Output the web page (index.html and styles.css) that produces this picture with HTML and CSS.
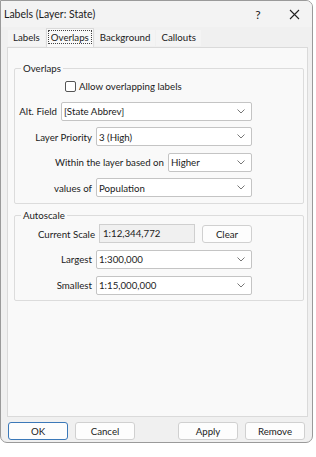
FILE: index.html
```html
<!DOCTYPE html>
<html lang="en">
<head>
    <meta charset="UTF-8">
    <title>Labels (Layer: State)</title>
    <link rel="stylesheet" href="styles.css">
</head>
<body>

<div class="window">
    <div class="titlebar">
        <span class="title">Labels (Layer: State)</span>
        <span class="title-btn help">?</span>
        <span class="title-btn close">
            <svg width="11" height="11" viewBox="0 0 11 11"><path d="M1 1 L10 10 M10 1 L1 10" stroke="#222" stroke-width="1.1" fill="none"/></svg>
        </span>
    </div>

    <div class="tabs">
        <div class="tab">Labels</div>
        <div class="tab active"><span class="focus">Overlaps</span></div>
        <div class="tab">Background</div>
        <div class="tab">Callouts</div>
    </div>

    <div class="panel">
        <fieldset class="group overlaps">
            <legend>Overlaps</legend>
            <label class="check-row">
                <span class="checkbox"></span>
                Allow overlapping labels
            </label>
            <div class="row">
                <span class="lbl">Alt. Field</span>
                <div class="combo w-alt">[State Abbrev]<svg class="chev" width="8" height="5" viewBox="0 0 8 5"><path d="M0.5 0.5 L4 4 L7.5 0.5" stroke="#777" fill="none"/></svg></div>
            </div>
            <div class="row">
                <span class="lbl">Layer Priority</span>
                <div class="combo w-wide">3 (High)<svg class="chev" width="8" height="5" viewBox="0 0 8 5"><path d="M0.5 0.5 L4 4 L7.5 0.5" stroke="#777" fill="none"/></svg></div>
            </div>
            <div class="row">
                <span class="lbl">Within the layer based on</span>
                <div class="combo w-short">Higher<svg class="chev" width="8" height="5" viewBox="0 0 8 5"><path d="M0.5 0.5 L4 4 L7.5 0.5" stroke="#777" fill="none"/></svg></div>
            </div>
            <div class="row">
                <span class="lbl">values of</span>
                <div class="combo w-wide">Population<svg class="chev" width="8" height="5" viewBox="0 0 8 5"><path d="M0.5 0.5 L4 4 L7.5 0.5" stroke="#777" fill="none"/></svg></div>
            </div>
        </fieldset>

        <fieldset class="group autoscale">
            <legend>Autoscale</legend>
            <div class="row">
                <span class="lbl">Current Scale</span>
                <div class="readonly">1:12,344,772</div>
                <button class="btn clear">Clear</button>
            </div>
            <div class="row">
                <span class="lbl">Largest</span>
                <div class="combo w-wide">1:300,000<svg class="chev" width="8" height="5" viewBox="0 0 8 5"><path d="M0.5 0.5 L4 4 L7.5 0.5" stroke="#777" fill="none"/></svg></div>
            </div>
            <div class="row">
                <span class="lbl">Smallest</span>
                <div class="combo w-wide">1:15,000,000<svg class="chev" width="8" height="5" viewBox="0 0 8 5"><path d="M0.5 0.5 L4 4 L7.5 0.5" stroke="#777" fill="none"/></svg></div>
            </div>
        </fieldset>
    </div>

    <div class="footer">
        <button class="btn default">OK</button>
        <button class="btn">Cancel</button>
        <span class="spacer"></span>
        <button class="btn">Apply</button>
        <button class="btn">Remove</button>
    </div>
</div>

</body>
</html>
```

FILE: styles.css
```css
body {
    margin: 0;
    padding: 0;
    background: #fff;
    font-family: Lato, "Open Sans", Arial, sans-serif;
    font-size: 9.7px;
    color: #1b1b1b;
}
.window {
    width: 311px;
    height: 441px;
    background-color: #f0f0f0;
    border: 1px solid #9a9a9a;
    border-radius: 0 7px 7px 7px;
    display: flex;
    flex-direction: column;
    overflow: hidden;
}
.titlebar {
    height: 26px;
    display: flex;
    align-items: center;
    background-color: #f3f3f3;
    font-size: 10.5px;
}
.title {
    flex: 1;
    padding-left: 3px;
}
.title-btn {
    width: 36px;
    text-align: center;
    font-size: 12px;
}
.close {
    display: flex;
    justify-content: center;
}
.tabs {
    display: flex;
    padding-left: 7px;
    margin-top: 2px;
    height: 17px;
    align-items: flex-end;
}
.tab {
    padding: 1px 5px 2px;
    margin-right: 1px;
    background-color: #f4f4f4;
    line-height: 13px;
}
.tab.active {
    background-color: #f9f9f9;
    padding: 2px 1px 3px;
    margin-bottom: -1px;
    border: 1px solid #dadada;
    border-bottom: none;
}
.focus {
    border: 1px dotted #444;
    padding: 0 2px;
}
.panel {
    flex: 1;
    margin: 1px 4px 0 6px;
    background-color: #f9f9f9;
    border: 1px solid #dadada;
    padding: 14px 3px 0 6px;
}
.group {
    margin: 0 0 5px 0;
    padding: 2px 51px 6px 4px;
    border: 1px solid #dcdcdc;
    border-radius: 2px;
    display: flex;
    flex-direction: column;
    gap: 6.6px;
}
.group.autoscale {
    padding-bottom: 5px;
}
.group legend {
    padding: 0 2px;
    margin-left: 2px;
}
.check-row {
    display: flex;
    align-items: center;
    margin-left: 46px;
    margin-top: 3px;
    height: 14px;
}
.checkbox {
    width: 9px;
    height: 9px;
    border: 1px solid #555;
    border-radius: 2px;
    background-color: #fff;
    margin-right: 3px;
}
.row {
    display: flex;
    justify-content: flex-end;
    align-items: center;
    gap: 4px;
    height: 19px;
}
.overlaps .row:first-of-type {
    margin-top: 2px;
}
.autoscale .row:first-of-type {
    margin-top: 1px;
}
.lbl {
    white-space: nowrap;
}
.combo {
    height: 17px;
    display: flex;
    align-items: center;
    justify-content: space-between;
    background-color: #fff;
    border: 1px solid #c4c4c4;
    border-radius: 2px;
    padding: 0 6px 0 2px;
}
.w-alt { width: 181px; }
.w-wide { width: 146px; }
.w-short { width: 74px; }
.readonly {
    width: 91px;
    height: 17px;
    line-height: 17px;
    padding-left: 3px;
    background-color: #f0f0f0;
    border: 1px solid #cfcfcf;
}
.btn {
    font-family: inherit;
    font-size: 9.7px;
    color: #1b1b1b;
    background-color: #fdfdfd;
    border: 1px solid #d0d0d0;
    border-radius: 3px;
    height: 18px;
    width: 60px;
    padding: 0;
}
.clear {
    width: 50px;
    margin-left: 3px;
}
.btn.default {
    border-color: #3b78b8;
}
.footer {
    display: flex;
    gap: 7px;
    padding: 5px 7px 0 7px;
    height: 25px;
    box-sizing: border-box;
}
.spacer {
    flex: 1;
}
```
